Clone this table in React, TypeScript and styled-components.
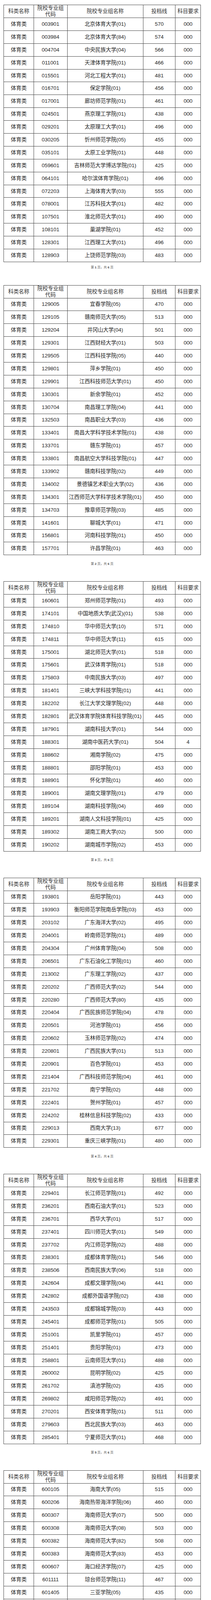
import React from "react";
import styled, { createGlobalStyle } from "styled-components";

type Row = [string, string, string, string];

const GlobalStyle = createGlobalStyle`
  html, body {
    margin: 0;
    padding: 0;
    background: #ffffff;
  }
  body {
    font-family: "Liberation Sans", "Noto Sans CJK SC", sans-serif;
    color: #222;
  }
`;

// one printed page of the pdf
const Sheet = styled.section<{ $height: number; $top: number }>`
  box-sizing: border-box;
  height: ${(p) => p.$height}px;
  padding: ${(p) => p.$top}px 0 19.5px 9.3px;
  display: flex;
  flex-direction: column;
  width: 540px;
`;

const Table = styled.table`
  width: 504px;
  border-collapse: collapse;
  table-layout: fixed;
`;

const HeadRow = styled.tr`
  height: 33px;
`;

const BodyRow = styled.tr`
  height: 32.9px;
`;

const HeadCell = styled.th`
  border: 1px solid #444;
  padding: 0 3px;
  font-weight: 400;
  font-size: 13.5px;
  line-height: 16px;
  color: #333;
  text-align: center;
  vertical-align: middle;
`;

const Cell = styled.td`
  border: 1px solid #444;
  padding: 0;
  font-size: 13.5px;
  line-height: 16px;
  color: #262626;
  text-align: center;
  vertical-align: middle;
  white-space: nowrap;
`;

const PageNo = styled.div`
  margin-top: auto;
  width: 504px;
  height: 10px;
  line-height: 10px;
  font-size: 8px;
  color: #555;
  text-align: center;
  white-space: pre;
`;

const Digit = styled.b`
  font-weight: 700;
  color: #444;
`;

const Note = styled.p`
  margin: 9px 0 0 0;
  width: 500px;
  padding-left: 3px;
  font-family: "Liberation Serif", "Noto Sans CJK SC", serif;
  font-size: 14px;
  line-height: 17px;
  letter-spacing: 0.6px;
  color: #222;
  white-space: nowrap;
`;

const pages: { rows: Row[]; extra?: boolean }[] = [
  {
    rows: [
      ["003901", "北京体育大学(01)", "570", "000"],
      ["003984", "北京体育大学(84)", "574", "000"],
      ["004704", "中央民族大学(04)", "566", "000"],
      ["011001", "天津体育学院(01)", "466", "000"],
      ["015501", "河北工程大学(01)", "481", "000"],
      ["016701", "保定学院(01)", "456", "000"],
      ["017001", "廊坊师范学院(01)", "461", "000"],
      ["024501", "燕京理工学院(01)", "438", "000"],
      ["029201", "太原理工大学(01)", "496", "000"],
      ["030205", "忻州师范学院(05)", "455", "000"],
      ["035101", "太原工业学院(01)", "448", "000"],
      ["059601", "吉林师范大学博达学院(01)", "425", "000"],
      ["064101", "哈尔滨体育学院(01)", "496", "000"],
      ["072203", "上海体育大学(03)", "555", "000"],
      ["078001", "江苏科技大学(01)", "482", "000"],
      ["107501", "淮北师范大学(01)", "490", "000"],
      ["108101", "巢湖学院(01)", "452", "000"],
      ["128301", "江西理工大学(01)", "496", "000"],
      ["128903", "上饶师范学院(03)", "483", "000"],
    ],
  },
  {
    rows: [
      ["129005", "宜春学院(05)", "470", "000"],
      ["129105", "赣南师范大学(05)", "513", "000"],
      ["129204", "井冈山大学(04)", "501", "000"],
      ["129301", "江西财经大学(01)", "503", "000"],
      ["129505", "江西科技学院(05)", "440", "000"],
      ["129801", "萍乡学院(01)", "450", "000"],
      ["129901", "江西科技师范大学(01)", "450", "000"],
      ["130301", "新余学院(01)", "452", "000"],
      ["130704", "南昌理工学院(04)", "441", "000"],
      ["132503", "南昌职业大学(03)", "436", "000"],
      ["133401", "南昌大学科学技术学院(01)", "438", "000"],
      ["133701", "赣东学院(01)", "457", "000"],
      ["133801", "南昌航空大学科技学院(01)", "447", "000"],
      ["133902", "赣南科技学院(02)", "449", "000"],
      ["134002", "景德镇艺术职业大学(02)", "436", "000"],
      ["134301", "江西师范大学科学技术学院(01)", "450", "000"],
      ["134703", "豫章师范学院(03)", "485", "000"],
      ["141601", "聊城大学(01)", "471", "000"],
      ["156801", "河南科技学院(01)", "450", "000"],
      ["157701", "许昌学院(01)", "463", "000"],
    ],
  },
  {
    rows: [
      ["160601", "郑州师范学院(01)", "493", "000"],
      ["174101", "中国地质大学(武汉)(01)", "538", "000"],
      ["174810", "华中师范大学(10)", "571", "000"],
      ["174811", "华中师范大学(11)", "615", "000"],
      ["175001", "湖北师范大学(01)", "518", "000"],
      ["175601", "武汉体育学院(01)", "518", "000"],
      ["175803", "中南民族大学(03)", "497", "000"],
      ["181401", "三峡大学科技学院(01)", "441", "000"],
      ["182202", "长江大学文理学院(02)", "448", "000"],
      ["182801", "武汉体育学院体育科技学院(01)", "445", "000"],
      ["187901", "湖南科技大学(01)", "544", "000"],
      ["188301", "湖南中医药大学(01)", "504", "4"],
      ["188602", "湘南学院(02)", "475", "000"],
      ["188801", "邵阳学院(01)", "453", "000"],
      ["188901", "怀化学院(01)", "460", "000"],
      ["189001", "湖南文理学院(01)", "479", "000"],
      ["189104", "湖南科技学院(04)", "469", "000"],
      ["189201", "湖南人文科技学院(01)", "425", "000"],
      ["189302", "湖南工商大学(02)", "500", "000"],
      ["190202", "湖南城市学院(02)", "453", "000"],
    ],
  },
  {
    rows: [
      ["193801", "岳阳学院(01)", "443", "000"],
      ["193903", "衡阳师范学院南岳学院(03)", "453", "000"],
      ["203102", "广东海洋大学(02)", "495", "000"],
      ["204001", "岭南师范学院(01)", "489", "000"],
      ["204304", "广州体育学院(04)", "508", "000"],
      ["206501", "广东石油化工学院(01)", "460", "000"],
      ["213002", "广东理工学院(02)", "437", "000"],
      ["220202", "广西师范大学(02)", "544", "000"],
      ["220280", "广西师范大学(80)", "435", "000"],
      ["220404", "广西民族师范学院(04)", "478", "000"],
      ["220501", "河池学院(01)", "456", "000"],
      ["220602", "玉林师范学院(02)", "474", "000"],
      ["220801", "广西民族大学(01)", "513", "000"],
      ["220901", "百色学院(01)", "453", "000"],
      ["221404", "广西科技师范学院(04)", "461", "000"],
      ["221702", "南宁学院(02)", "448", "000"],
      ["222401", "贺州学院(01)", "457", "000"],
      ["224202", "桂林信息科技学院(02)", "433", "000"],
      ["229013", "西南大学(13)", "677", "000"],
      ["229301", "重庆三峡学院(01)", "480", "000"],
    ],
  },
  {
    rows: [
      ["229401", "长江师范学院(01)", "492", "000"],
      ["236201", "西南石油大学(01)", "523", "000"],
      ["236701", "西华大学(01)", "517", "000"],
      ["237401", "四川师范大学(01)", "549", "000"],
      ["237702", "内江师范学院(02)", "488", "000"],
      ["238301", "成都体育学院(01)", "546", "000"],
      ["238506", "西南民族大学(06)", "518", "000"],
      ["242604", "成都文理学院(04)", "441", "000"],
      ["242802", "成都外国语学院(02)", "438", "000"],
      ["243503", "成都锦城学院(03)", "443", "000"],
      ["245401", "成都师范学院(01)", "505", "000"],
      ["251001", "凯里学院(01)", "457", "000"],
      ["251401", "贵阳学院(01)", "473", "000"],
      ["258801", "云南师范大学(01)", "488", "000"],
      ["260002", "昆明学院(02)", "425", "000"],
      ["261702", "滇池学院(02)", "435", "000"],
      ["269802", "咸阳师范学院(02)", "491", "000"],
      ["270201", "西安体育学院(01)", "511", "000"],
      ["279603", "西北民族大学(03)", "463", "000"],
      ["285401", "宁夏师范大学(01)", "468", "000"],
    ],
  },
  {
    rows: [
      ["600105", "海南大学(05)", "515", "000"],
      ["600206", "海南热带海洋学院(06)", "460", "000"],
      ["600307", "海南师范大学(07)", "500", "000"],
      ["600308", "海南师范大学(08)", "503", "000"],
      ["600382", "海南师范大学(82)", "508", "000"],
      ["600383", "海南师范大学(83)", "453", "000"],
      ["600607", "海口经济学院(07)", "425", "000"],
      ["601111", "琼台师范学院(11)", "467", "000"],
      ["601405", "三亚学院(05)", "435", "000"],
      ["072204", "上海体育大学(04)", "475", "000"],
    ],
    extra: true,
  },
];

const widths = [76.4, 86, 194, 82.6, 65];

function ScoreTable({ rows, extra }: { rows: Row[]; extra?: boolean }) {
  return (
    <Table>
      <colgroup>
        {widths.map((w, i) => (
          <col key={i} style={{ width: w }} />
        ))}
      </colgroup>
      <thead>
        <HeadRow>
          <HeadCell>科类名称</HeadCell>
          <HeadCell>院校专业组代码</HeadCell>
          <HeadCell>院校专业组名称</HeadCell>
          <HeadCell>投档线</HeadCell>
          <HeadCell>科目要求</HeadCell>
        </HeadRow>
      </thead>
      <tbody>
        {rows.map((r, i) => (
          <BodyRow key={r[0]}>
            <Cell>{extra && i === rows.length - 1 ? "体育类预科" : "体育类"}</Cell>
            <Cell>{r[0]}</Cell>
            <Cell>{r[1]}</Cell>
            <Cell>{r[2]}</Cell>
            <Cell>{r[3]}</Cell>
          </BodyRow>
        ))}
      </tbody>
    </Table>
  );
}

export default function App() {
  return (
    <>
      <GlobalStyle />
      {pages.map((p, i) => (
        <Sheet
          key={i}
          $height={i === 0 ? 709.5 : i === pages.length - 1 ? 750.5 : 758.5}
          $top={i === 0 ? 12 : 20}
        >
          <ScoreTable rows={p.rows} extra={p.extra} />
          {p.extra && (
            <Note>
              “科目要求”栏内4和000均为招生院校专业组对考生选考科目要求的代码。“4”表
              <br />
              示物理科目，“000”表示不提选考科目。
            </Note>
          )}
          <PageNo>
            第 <Digit>{i + 1}</Digit> 页，共 <Digit>6</Digit> 页
          </PageNo>
        </Sheet>
      ))}
    </>
  );
}
